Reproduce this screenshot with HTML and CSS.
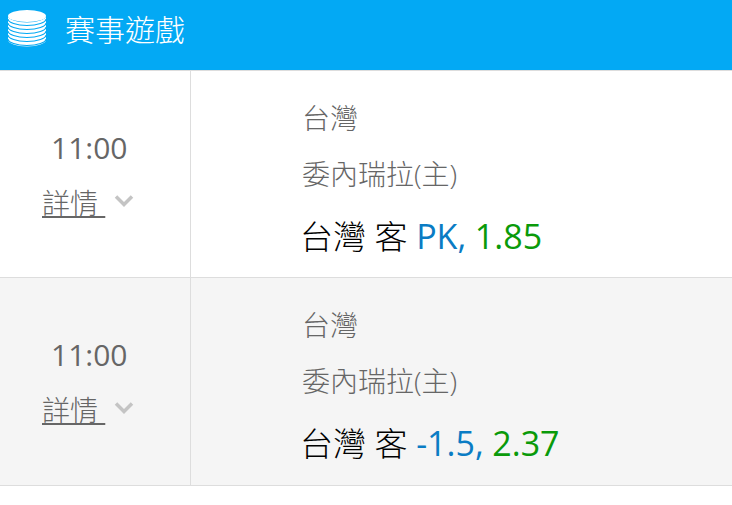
FILE: index.html
```html
<!DOCTYPE html>
<html lang="zh-Hant">
<head>
    <meta charset="UTF-8">
    <meta name="viewport" content="width=device-width, initial-scale=1.0">
    <title>賽事遊戲</title>
    <link rel="stylesheet" href="styles.css">
</head>
<body>
    <div class="app-header">
        <svg class="header-icon" width="40" height="38" viewBox="0 0 40 38">
            <ellipse cx="20" cy="7" rx="19" ry="6" fill="#fff"/>
            <path d="M1 7v24c0 3.500 8.500 6.500 19 6.500s19-3 19-6.500V7c0 3.500-8.500 6.500-19 6.500S1 10.500 1 7z" fill="#fff"/>
            <g fill="none" stroke="#03a9f4" stroke-width="1.100">
                <path d="M1 10c0 3.500 8.500 6.500 19 6.500s19-3 19-6.500"/>
                <path d="M1 14c0 3.500 8.500 6.500 19 6.500s19-3 19-6.500"/>
                <path d="M1 18c0 3.500 8.500 6.500 19 6.500s19-3 19-6.500"/>
                <path d="M1 22c0 3.500 8.500 6.500 19 6.500s19-3 19-6.500"/>
                <path d="M1 26c0 3.500 8.500 6.500 19 6.500s19-3 19-6.500"/>
                <path d="M1 30c0 3.500 8.500 6.500 19 6.500s19-3 19-6.500"/>
            </g>
        </svg>
        <span class="header-title">賽事遊戲</span>
    </div>

    <div class="match">
        <div class="match-time">
            <div class="time">11:00</div>
            <div class="detail"><a class="detail-link">詳情&nbsp;</a><svg class="chevron" width="20" height="14" viewBox="0 0 20 14"><path d="M2 2.500l8 8 8-8" fill="none" stroke="#c4c4c4" stroke-width="3.500"/></svg></div>
        </div>
        <div class="match-info">
            <div class="league">台灣</div>
            <div class="teams">委內瑞拉(主)</div>
            <div class="bet">台灣 客 <span class="bet-type">PK,</span> <span class="bet-odds">1.85</span></div>
        </div>
    </div>

    <div class="match alt">
        <div class="match-time">
            <div class="time">11:00</div>
            <div class="detail"><a class="detail-link">詳情&nbsp;</a><svg class="chevron" width="20" height="14" viewBox="0 0 20 14"><path d="M2 2.500l8 8 8-8" fill="none" stroke="#c4c4c4" stroke-width="3.500"/></svg></div>
        </div>
        <div class="match-info">
            <div class="league">台灣</div>
            <div class="teams">委內瑞拉(主)</div>
            <div class="bet">台灣 客 <span class="bet-type">-1.5,</span> <span class="bet-odds">2.37</span></div>
        </div>
    </div>
</body>
</html>
```

FILE: styles.css
```css
body {
    font-family: "Open Sans", "Noto Sans CJK TC", sans-serif;
    background-color: #fff;
    margin: 0;
    color: #666;
}

.app-header {
    display: flex;
    align-items: center;
    height: 70px;
    background-color: #03a9f4;
    padding-left: 7px;
    padding-bottom: 14px;
    box-sizing: border-box;
    color: #fff;
}

.header-title {
    font-size: 30px;
    font-weight: 300;
    margin-left: 18px;
}

.match {
    display: flex;
    height: 207px;
    box-sizing: border-box;
    border-top: 1px solid #ddd;
}

.match.alt {
    height: 209px;
    background-color: #f5f5f5;
    border-bottom: 1px solid #ddd;
}

.match-time {
    width: 191px;
    flex-shrink: 0;
    box-sizing: border-box;
    border-right: 1px solid #ddd;
    padding-top: 54px;
    padding-left: 42px;
}

.time {
    font-size: 30px;
    line-height: 46px;
    margin-left: 9px;
}

.detail {
    display: flex;
    align-items: center;
    font-size: 28px;
    font-weight: 300;
    line-height: 40px;
    margin-top: 12px;
}

.detail-link {
    text-decoration: underline;
}

.chevron {
    margin-left: 9px;
    margin-top: -5px;
}

.match-info {
    padding-left: 111px;
    padding-top: 27px;
    font-weight: 300;
}

.league,
.teams {
    font-size: 28px;
    line-height: 40px;
}

.teams {
    margin-top: 16px;
}

.bet {
    font-size: 33px;
    line-height: 48px;
    margin-top: 18px;
    margin-left: -2px;
    color: #000;
}

.bet-type,
.bet-odds {
    font-size: 34px;
    font-weight: 400;
}

.bet-type {
    color: #0a7cc4;
}

.bet-odds {
    color: #0a9a0a;
}
```
